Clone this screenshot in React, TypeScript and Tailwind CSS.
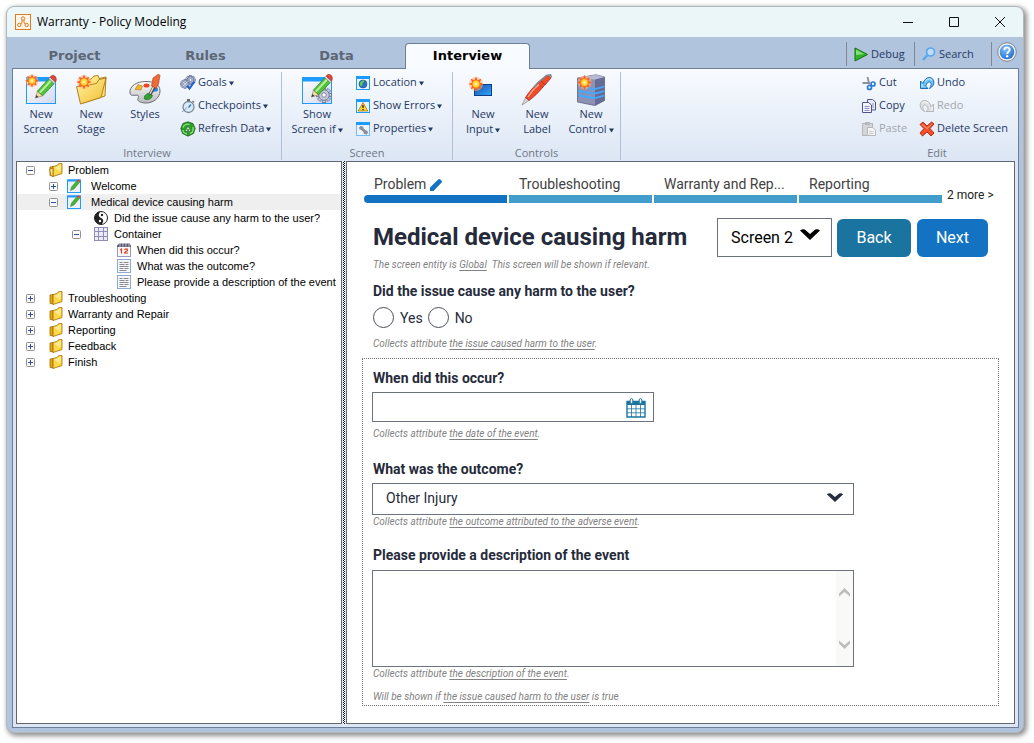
import React, { useState } from "react";

type IconProps = { className?: string };

/* ---------- shared drawing pieces ---------- */

function Burst({ x, y, s = 1 }: { x: number; y: number; s?: number }) {
  return (
    <g transform={`translate(${x} ${y}) scale(${s})`}>
      <circle r="6.4" fill="#ffb27a" opacity=".55" />
      {[0, 45, 90, 135, 180, 225, 270, 315].map((a) => (
        <path key={a} d="M-1.6 -3 L0 -6.8 L1.6 -3Z" fill="#ff5a1f" transform={`rotate(${a})`} />
      ))}
      <circle r="3.9" fill="#ff8a1c" />
      <circle r="2.9" fill="#ffd83d" />
      <circle r="1.2" fill="#fff6a8" />
    </g>
  );
}

function Pencil({ transform }: { transform?: string }) {
  return (
    <g transform={transform}>
      <path d="M10.500 24l2-7 5.200 4.800z" fill="#f3d9a4" stroke="#8a7a50" strokeWidth=".6" />
      <path d="M10.500 24l.9-3 2 1.900z" fill="#333" />
      <path d="M12.500 17L23.800 4.700l5.400 4.900-11.500 12.200z" fill="#4fc23a" stroke="#2c7f22" strokeWidth=".7" />
      <path d="M14 18L25 6l1.500 1.400L15.600 19.300z" fill="#b6f09b" />
      <path d="M23.800 4.700l1.400-1.500 5.400 4.900-1.400 1.500z" fill="#d9d9d9" stroke="#888" strokeWidth=".5" />
      <path d="M25.200 3.200c1-1.900 2.900-2.500 4.600-1.200 1.700 1.400 1.900 3.700.8 6.100z" fill="#e2453a" stroke="#9d2b22" strokeWidth=".6" />
    </g>
  );
}

function Gear({ x, y, r, fill, stroke }: { x: number; y: number; r: number; fill: string; stroke: string }) {
  return (
    <g transform={`translate(${x} ${y}) scale(${r / 7})`}>
      {[0, 45, 90, 135, 180, 225, 270, 315].map((a) => (
        <rect key={a} x="-1.600" y="-7" width="3.200" height="4" fill={fill} stroke={stroke} strokeWidth=".8" transform={`rotate(${a})`} />
      ))}
      <circle r="4.9" fill={fill} stroke={stroke} strokeWidth=".8" />
      <circle r="2.100" fill="#fff" stroke={stroke} strokeWidth=".8" />
    </g>
  );
}

/* ---------- large ribbon icons ---------- */

function ScreenFrame() {
  return (
    <>
      <defs>
        <linearGradient id="pane" x1="0" y1="0" x2="1" y2="1">
          <stop offset="0" stopColor="#ffffff" />
          <stop offset="1" stopColor="#d3d8ee" />
        </linearGradient>
      </defs>
      <rect x="1.500" y="3.500" width="29" height="26" fill="url(#pane)" stroke="#1e9bff" />
      <rect x="2" y="4" width="28" height="3.500" fill="#1e9bff" />
    </>
  );
}

function NewScreenIcon() {
  return (
    <svg viewBox="0 0 32 32" className="size-8">
      <ScreenFrame />
      <Pencil />
      <Burst x={7} y={6.800} />
    </svg>
  );
}

function FolderIcon() {
  return (
    <svg viewBox="0 0 32 32" className="size-8">
      <defs>
        <linearGradient id="fold" x1="0" y1="0" x2="1" y2="1">
          <stop offset="0" stopColor="#fff3a6" />
          <stop offset="1" stopColor="#f4bd2c" />
        </linearGradient>
      </defs>
      <path d="M4 8l10-2 2-1 3-3 4-.5 1 3 7-1.500-1 19-22 7z" fill="#ffe37a" stroke="#a87612" strokeWidth=".9" />
      <path d="M1.500 12.500l4 17.500L26 23.500 31 4l-7 1.500-2.500 4L8 12z" fill="url(#fold)" stroke="#a87612" strokeWidth=".9" />
      <Burst x={9} y={8} s={1.1} />
    </svg>
  );
}

function PaletteIcon() {
  return (
    <svg viewBox="0 0 32 32" className="size-8">
      <defs>
        <linearGradient id="pal" x1="0" y1="0" x2="0" y2="1">
          <stop offset="0" stopColor="#ffffff" />
          <stop offset="1" stopColor="#b9b9bd" />
        </linearGradient>
      </defs>
      <path d="M1 19C0 12 8 7.500 17 7.500c8 0 14 3 14 9.500 0 7-7 12.500-15 12-5-.3-8-2-7-4.500 1-2.300 1-3.500-2-3.300-3 .2-5.600.6-6-2.200z" fill="url(#pal)" stroke="#6c6c70" strokeWidth="1" />
      <path d="M6 15.500l3-5 4.500 1.500-1.500 4z" fill="#f5b52a" stroke="#a6751a" strokeWidth=".6" />
      <ellipse cx="17.500" cy="11.500" rx="3" ry="2" fill="#f0441f" />
      <ellipse cx="26" cy="15.500" rx="3" ry="2.200" fill="#2a86e8" />
      <path d="M15.500 25c-1-3.500 2-5.500 5.500-6l2.500 2.500c-1 3.500-4.500 5-8 3.500z" fill="#2fa530" stroke="#145c18" strokeWidth=".6" />
      <path d="M19.500 20l4.500-9 3.500 2-5.500 8.500z" fill="#4b4b4b" />
      <path d="M20.500 19.500l3.500-7.500 1.500.8-4 7.500z" fill="#d8d8d8" />
      <path d="M22.500 12l1.500-8L29.500 0l1.500 1.500-1.500 8.500-2.500 4.500z" fill="#f06a35" stroke="#a33c12" strokeWidth=".6" />
    </svg>
  );
}

function ShowScreenIcon() {
  return (
    <svg viewBox="0 0 32 32" className="size-8">
      <ScreenFrame />
      <Gear x={23} y={21} r={7.500} fill="#c6cadb" stroke="#6c7290" />
      <Pencil transform="translate(0 -1)" />
    </svg>
  );
}

function NewInputIcon() {
  return (
    <svg viewBox="0 0 32 32" className="size-8">
      <defs>
        <linearGradient id="inp" x1="0" y1="0" x2="1" y2="1">
          <stop offset="0" stopColor="#1450a8" />
          <stop offset="1" stopColor="#36a7ff" />
        </linearGradient>
      </defs>
      <rect x="7.500" y="10.500" width="17" height="11" fill="url(#inp)" stroke="#0a3f86" />
      <Burst x={9} y={10} s={1.1} />
    </svg>
  );
}

function PenIcon() {
  return (
    <svg viewBox="0 0 32 32" className="size-8">
      <path d="M1 31l4-8 3.500 3z" fill="#d9d9d9" stroke="#777" strokeWidth=".6" />
      <path d="M4.500 23.500C8 18 13 12 18 8l4.500 4.500C18 18 13 23 8 26.500z" fill="#f04a2a" stroke="#8f2110" strokeWidth=".7" />
      <path d="M7 23c3-5 7-9.500 11.500-13" stroke="#ffa58f" strokeWidth="1.300" fill="none" />
      <path d="M17 9l2.500-2.500 4.500 4.500-2.500 2.500z" fill="#f04a2a" stroke="#8f2110" strokeWidth=".4" />
      <path d="M19.500 6.500L27 1.500l3 2.500-6 7z" fill="#f04a2a" stroke="#8f2110" strokeWidth=".7" />
      <path d="M13 13.500L17 8.500 25.500 1.500l4-.5 1 2.500" stroke="#85888e" strokeWidth="1.700" fill="none" />
    </svg>
  );
}

function ServerIcon() {
  return (
    <svg viewBox="0 0 32 32" className="size-8">
      <path d="M2.500 4L21 .8 29.500 3v23.500L20 31.500 2.500 28z" fill="#8d92b5" stroke="#5c6083" strokeWidth=".8" />
      <path d="M20 5.500L29.500 3v23.500L20 31.500z" fill="#676c94" />
      <path d="M2.500 4L21 .8 29.500 3 20 5.500z" fill="#b5b9d3" />
      <path d="M3 12.500l17 2.500 9.500-2.500M3 17l17 2.500 9.500-2.500M3 21.500L20 24l9.500-2.500" stroke="#42a9ff" strokeWidth="1.800" fill="none" />
      <Burst x={9.500} y={8.500} s={1.100} />
    </svg>
  );
}

/* ---------- small icons ---------- */

function GoalsIcon() {
  return (
    <svg viewBox="0 0 16 16" className="size-4">
      <Gear x={10.500} y={5} r={4.800} fill="#b3bbd8" stroke="#4d587f" />
      <Gear x={5} y={9} r={4.600} fill="#c9cfe4" stroke="#4d587f" />
      <path d="M7 10.500l2.500 3 5-7" fill="none" stroke="#1c63c9" strokeWidth="2" />
    </svg>
  );
}

function StopwatchIcon() {
  return (
    <svg viewBox="0 0 16 16" className="size-4">
      <path d="M7 1h3v2.500H7z" fill="#666" />
      <path d="M12.500 3l1.500 1.500" stroke="#777" strokeWidth="1.500" />
      <circle cx="8.500" cy="9" r="5.500" fill="#d6ebfb" stroke="#7d8794" strokeWidth="1.300" />
      <path d="M8.500 9.500L11 6.500" stroke="#2b6fb8" strokeWidth="1.200" />
      <path d="M2 14l5-4.500" stroke="#7d8794" strokeWidth=".8" />
    </svg>
  );
}

function RefreshIcon() {
  return (
    <svg viewBox="0 0 16 16" className="size-4">
      <path d="M8 .8l5 1.700 2.200 5-1.700 5L8 15.200l-5.500-2.700L.8 7.500l2-5z" fill="#2f9c2b" stroke="#14590f" strokeWidth=".7" />
      <path d="M3 6.500C4 3.500 7 2.500 9.500 3.500M12.800 6c1 3-.3 5.500-2.800 6.700M7 12.800C4.500 12.500 3.200 11 3 9" stroke="#8de37f" strokeWidth="1.300" fill="none" />
      <path d="M8 5l3 5.500H5z" fill="#f3fff0" stroke="#14590f" strokeWidth=".6" />
      <circle cx="8" cy="8.900" r="1.200" fill="#2f9c2b" />
    </svg>
  );
}

function WindowFrame({ children, pale }: { children: React.ReactNode; pale?: boolean }) {
  return (
    <svg viewBox="0 0 16 16" className="size-4">
      <rect x="1.500" y="1.500" width="13" height="13" fill="#eef2fb" stroke={pale ? "#6fbcf8" : "#1e9bff"} />
      <rect x="1" y="1" width="14" height="3" fill="#1e9bff" />
      {children}
    </svg>
  );
}

function CutIcon() {
  return (
    <svg viewBox="0 0 16 16" className="size-4">
      <path d="M6.500 2l1.800 7.500M1.500 8h7.500" stroke="#8b8f96" strokeWidth="1.800" fill="none" />
      <circle cx="12" cy="9" r="2" fill="none" stroke="#2b7bd8" strokeWidth="1.700" />
      <circle cx="8.500" cy="12.500" r="2" fill="none" stroke="#2b7bd8" strokeWidth="1.700" />
    </svg>
  );
}

function CopyIcon() {
  return (
    <svg viewBox="0 0 16 16" className="size-4">
      <path d="M6.500 1.500h5l3 2.500v8h-8z" fill="#e9ebf8" stroke="#4e5490" />
      <path d="M1.500 4.500h6l3 2.500v7.500h-9z" fill="#f5f6fd" stroke="#4e5490" />
      <path d="M3.500 8.500h5M3.500 10.500h5M3.500 12.500h5" stroke="#8d93c4" />
      <path d="M12 5v5" stroke="#8d93c4" />
    </svg>
  );
}

function PasteIcon() {
  return (
    <svg viewBox="0 0 16 16" className="size-4">
      <rect x="1.500" y="2.500" width="10" height="12" fill="#d3d5d8" stroke="#b5b7ba" />
      <rect x="4" y="1" width="5" height="3" fill="#b5b7ba" />
      <path d="M6.500 6.500h5l3 2.500v5.500h-8z" fill="#f5f5f6" stroke="#b5b7ba" />
      <path d="M8 10.500h4.500M8 12.500h4.500" stroke="#c5c7ca" />
    </svg>
  );
}

function UndoIcon({ muted }: { muted?: boolean }) {
  const fill = muted ? "#dfe1e3" : "#6cc4f7";
  const line = muted ? "#b3b5b8" : "#1c6fb8";
  return (
    <svg viewBox="0 0 16 16" className="size-4">
      <g transform={muted ? "translate(16 0) scale(-1 1)" : undefined}>
        <path d="M1.500 6v7.500h7.500L6.800 11.200C7.500 8 9.500 6.300 11.200 7.200c1.600 1 1.200 3.600-.7 6.300C14 11.800 15.400 8.800 14.600 6 13.400 1 6.500.8 4 8.500z" fill={fill} stroke={line} strokeWidth="1" strokeLinejoin="round" />
        <path d="M6 6.500C8 3.500 11.500 3 13 5.500M3 9v3" stroke="#fff" strokeWidth="1" fill="none" opacity=".8" />
      </g>
    </svg>
  );
}

function DeleteIcon() {
  return (
    <svg viewBox="0 0 16 16" className="size-4">
      <path d="M1 3.500L4 1l4 4 4.500-4L15 3 11 7.500l4 4.500-3 3-4-4-4.500 4L1 12l4-4.500z" fill="#f2512c" stroke="#a82209" strokeWidth=".9" />
      <path d="M3 3.500l5 4 4.500-4" stroke="#ff9c80" fill="none" />
    </svg>
  );
}

function PlayIcon() {
  return (
    <svg viewBox="0 0 16 16" className="size-4">
      <path d="M2 2l12.500 6.500L2 15z" fill="#2fb52c" stroke="#14700f" />
      <path d="M3 3.500l8 4.500-8 1z" fill="#83e07a" />
    </svg>
  );
}

function SearchIcon() {
  return (
    <svg viewBox="0 0 16 16" className="size-4">
      <circle cx="9.500" cy="6" r="4" fill="#c3dcf6" stroke="#5aa7ee" strokeWidth="1.700" />
      <path d="M6.500 9l-4.500 5" stroke="#5aa7ee" strokeWidth="2.400" />
    </svg>
  );
}

function HelpIcon() {
  return (
    <svg viewBox="0 0 20 20" className="size-5">
      <defs>
        <radialGradient id="help" cx=".4" cy=".3" r=".8">
          <stop offset="0" stopColor="#7fc0ff" />
          <stop offset="1" stopColor="#1c66c4" />
        </radialGradient>
      </defs>
      <circle cx="10" cy="10" r="9.300" fill="#eef0f4" stroke="#7d8490" strokeWidth="1" />
      <circle cx="10" cy="10" r="7.300" fill="url(#help)" />
      <path d="M7.300 8C7.300 4.500 12.800 4.600 12.700 7.800 12.600 9.800 10.200 9.600 10.200 12" stroke="#fff" strokeWidth="1.900" fill="none" />
      <circle cx="10.200" cy="14.300" r="1.200" fill="#fff" />
    </svg>
  );
}

/* ---------- tree icons ---------- */

function StageIcon({ open }: { open?: boolean }) {
  return (
    <svg viewBox="0 0 14 14" className="size-[14px] shrink-0">
      <path d="M1 4l3-.5V13l-3-.5z" fill="#e9aa12" stroke="#9c6c06" strokeWidth=".8" />
      <path d="M4 3.500L8 2.500 9.500.8 13 .5v10L4 13.500z" fill="#ffd84a" stroke="#9c6c06" strokeWidth=".8" />
      <path d="M5 4.500l4-1 1.500-1.700 1.500-.3-1 7z" fill="#fff2a8" opacity=".8" />
      {open && <path d="M.5 6l3.500-.7V13.500L2 12.500z" fill="#ffe88a" stroke="#9c6c06" strokeWidth=".8" />}
    </svg>
  );
}

function ScreenIcon() {
  return (
    <svg viewBox="0 0 14 14" className="size-[14px] shrink-0">
      <rect x=".5" y="1" width="13" height="12.500" fill="#eef1fb" stroke="#1e9bff" />
      <rect x=".5" y=".5" width="13" height="2" fill="#1e9bff" />
      <path d="M3.500 11.500l1-3.500L10 1.500 12.500 3.500 7 10z" fill="#46b536" stroke="#2c7f22" strokeWidth=".5" />
      <path d="M10 1.500L11.200.2 13.700 2l-1.200 1.500z" fill="#e2453a" />
    </svg>
  );
}

function YinYangIcon() {
  return (
    <svg viewBox="0 0 14 14" className="size-[14px] shrink-0">
      <circle cx="7" cy="7" r="6.500" fill="#fff" stroke="#222" />
      <path d="M7 .5a6.500 6.500 0 0 0 0 13 3.250 3.250 0 0 0 0-6.500 3.250 3.250 0 0 1 0-6.500z" fill="#222" transform="rotate(20 7 7)" />
      <circle cx="8" cy="4" r="1.200" fill="#222" />
      <circle cx="6" cy="10" r="1.200" fill="#fff" />
    </svg>
  );
}

function GridIcon() {
  return (
    <svg viewBox="0 0 14 14" className="size-[14px] shrink-0">
      <rect x=".5" y=".5" width="13" height="13" fill="#eceaf8" stroke="#8f8fb5" />
      <path d="M4.500 0v14M9.500 0v14M0 4.500h14M0 9.500h14" stroke="#8f8fb5" />
    </svg>
  );
}

function DateIcon() {
  return (
    <svg viewBox="0 0 14 14" className="size-[14px] shrink-0">
      <rect x=".5" y="2.500" width="13" height="11" fill="#f7f7fc" stroke="#9a9ac0" />
      <path d="M0 3L2 .5h11L14 4H0z" fill="#5a5a70" />
      <path d="M3 0v4M6 0v4M9 0v4M12 0v4" stroke="#d8d8e4" strokeWidth=".8" />
      <path d="M3 7l1.500-1v4.500M7.500 7c.5-1.500 3.500-1.500 3 .3-.3 1-3 1.700-3 2.700H11" stroke="#e2401c" strokeWidth="1.200" fill="none" />
    </svg>
  );
}

function TextIcon() {
  return (
    <svg viewBox="0 0 14 14" className="size-[14px] shrink-0">
      <rect x=".5" y=".5" width="13" height="13" fill="#f3f6fd" stroke="#8da9cf" />
      <path d="M2.500 3.500h3M6.500 3.500h5M2.500 5.500h5M8.500 5.500h3M2.500 7.500h9M2.500 9.500h4M7.500 9.500h4M2.500 11.500h7" stroke="#8a8a8a" />
    </svg>
  );
}

/* ---------- ribbon parts ---------- */

function Caret() {
  return (
    <svg viewBox="0 0 5 5" className="ml-[2px] inline-block size-[5px] align-middle" aria-hidden="true">
      <path d="M0 .5h5L2.500 4.500z" fill="#1f3864" />
    </svg>
  );
}

function BigButton({ icon, lines, menu, className }: { icon: React.ReactNode; lines: string[]; menu?: boolean; className: string }) {
  return (
    <button type="button" className={`flex shrink-0 flex-col items-center pt-[2px] ${className}`}>
      {icon}
      <span className="flex flex-col items-center whitespace-nowrap leading-[15px]">
        {lines.map((line, i) => (
          <span key={line}>
            {line}
            {menu && i === lines.length - 1 && <Caret />}
          </span>
        ))}
      </span>
    </button>
  );
}

function SmallButton({ icon, label, menu, disabled }: { icon: React.ReactNode; label: string; menu?: boolean; disabled?: boolean }) {
  return (
    <button type="button" disabled={disabled} className="flex h-[23px] items-center gap-[2px] pb-[2px] whitespace-nowrap disabled:text-[#a3a6ab]">
      {icon}
      <span>
        {label}
        {menu && <Caret />}
      </span>
    </button>
  );
}

function Group({ title, children, className, last }: { title: string; children: React.ReactNode; className: string; last?: boolean }) {
  return (
    <section className={`flex shrink-0 flex-col justify-between ${last ? "" : "border-r border-[#aebfd6]"} ${className}`}>
      <div className="flex">{children}</div>
      <h2 className="text-center leading-[15px] text-[#6f7787]">{title}</h2>
    </section>
  );
}

function Ribbon() {
  return (
    <div className="flex h-[92px] pt-[3px] pb-px font-['Open_Sans','Noto_Sans',sans-serif] text-[11px] text-[#1f3864]">
      <Group title="Interview" className="w-[269px]">
        <BigButton icon={<NewScreenIcon />} lines={["New", "Screen"]} className="ml-[3px] w-[50px]" />
        <BigButton icon={<FolderIcon />} lines={["New", "Stage"]} className="w-[50px]" />
        <BigButton icon={<PaletteIcon />} lines={["Styles"]} className="w-[58px]" />
        <div className="ml-[6px]">
          <SmallButton icon={<GoalsIcon />} label="Goals" menu />
          <SmallButton icon={<StopwatchIcon />} label="Checkpoints" menu />
          <SmallButton icon={<RefreshIcon />} label="Refresh Data" menu />
        </div>
      </Group>
      <Group title="Screen" className="w-[171px]">
        <BigButton icon={<ShowScreenIcon />} lines={["Show", "Screen if"]} menu className="ml-[4px] w-[62px]" />
        <div className="ml-[7px]">
          <SmallButton
            icon={
              <WindowFrame>
                <circle cx="8" cy="9" r="4" fill="#2a72c8" stroke="#1a4f90" strokeWidth=".6" />
                <path d="M5 7.500c1.500-2 3.500-2.500 4.500-2-.5 2-2 2-2 3.500s-1 2-1.500 2.500c-1-1-1.300-2.500-1-4z" fill="#5ec94a" />
              </WindowFrame>
            }
            label="Location"
            menu
          />
          <SmallButton
            icon={
              <WindowFrame>
                <path d="M8 4.500l4.800 8.500H3.200z" fill="#ffd532" stroke="#a8780a" strokeWidth=".8" />
                <path d="M8 7v3M8 11v1.200" stroke="#222" strokeWidth="1.300" />
              </WindowFrame>
            }
            label="Show Errors"
            menu
          />
          <SmallButton
            icon={
              <WindowFrame pale>
                <path d="M4 6.500L5.500 5l2.500.5.500 1.700 2.500 2.300 1.500.5.500 2L11.500 13.500 9 13l-.5-2L6 8.800 4.500 8.500z" fill="#8c8f96" />
              </WindowFrame>
            }
            label="Properties"
            menu
          />
        </div>
      </Group>
      <Group title="Controls" className="w-[168px]">
        <BigButton icon={<NewInputIcon />} lines={["New", "Input"]} menu className="ml-[3px] w-[54px]" />
        <BigButton icon={<PenIcon />} lines={["New", "Label"]} className="w-[54px]" />
        <BigButton icon={<ServerIcon />} lines={["New", "Control"]} menu className="w-[54px]" />
      </Group>
      <div className="grow" />
      <Group title="Edit" className="w-[162px]" last>
        <div className="ml-[5px] w-[58px]">
          <SmallButton icon={<CutIcon />} label="Cut" />
          <SmallButton icon={<CopyIcon />} label="Copy" />
          <SmallButton icon={<PasteIcon />} label="Paste" disabled />
        </div>
        <div>
          <SmallButton icon={<UndoIcon />} label="Undo" />
          <SmallButton icon={<UndoIcon muted />} label="Redo" disabled />
          <SmallButton icon={<DeleteIcon />} label="Delete Screen" />
        </div>
      </Group>
    </div>
  );
}

/* ---------- tree ---------- */

type Row = { label: string; pad: string; box?: "+" | "-"; icon: React.ReactNode; gap: string; selected?: boolean };

const rows: Row[] = [
  { label: "Problem", pad: "pl-[9px]", box: "-", icon: <StageIcon open />, gap: "gap-[5px]" },
  { label: "Welcome", pad: "pl-[32px]", box: "+", icon: <ScreenIcon />, gap: "gap-[10px]" },
  { label: "Medical device causing harm", pad: "pl-[32px]", box: "-", icon: <ScreenIcon />, gap: "gap-[10px]", selected: true },
  { label: "Did the issue cause any harm to the user?", pad: "pl-[77px]", icon: <YinYangIcon />, gap: "gap-[6px]" },
  { label: "Container", pad: "pl-[55px]", box: "-", icon: <GridIcon />, gap: "gap-[6px]" },
  { label: "When did this occur?", pad: "pl-[100px]", icon: <DateIcon />, gap: "gap-[6px]" },
  { label: "What was the outcome?", pad: "pl-[100px]", icon: <TextIcon />, gap: "gap-[6px]" },
  { label: "Please provide a description of the event", pad: "pl-[100px]", icon: <TextIcon />, gap: "gap-[6px]" },
  ...["Troubleshooting", "Warranty and Repair", "Reporting", "Feedback", "Finish"].map(
    (label): Row => ({ label, pad: "pl-[9px]", box: "+", icon: <StageIcon />, gap: "gap-[5px]" }),
  ),
];

const boxMargins: Record<string, string> = {
  "pl-[9px]": "mr-[14px]",
  "pl-[32px]": "mr-[9px]",
  "pl-[55px]": "mr-[13px]",
};

function Tree() {
  return (
    <ul className="w-[326px] shrink-0 border border-[#64686e] bg-white font-['Liberation_Sans',Arial,sans-serif] text-[11px] text-black">
      {rows.map((r) => (
        <li key={r.label} className={`flex h-4 items-center ${r.pad} ${r.selected ? "bg-[#efefef]" : ""}`}>
          {r.box && (
            <button type="button" aria-label={r.box === "+" ? `Expand ${r.label}` : `Collapse ${r.label}`} className={`shrink-0 ${boxMargins[r.pad]}`}>
              <svg viewBox="0 0 9 9" className="size-[9px]">
                <rect x=".5" y=".5" width="8" height="8" rx="1" fill="#fafafa" stroke="#919191" />
                <path d={r.box === "+" ? "M2 4.500h5M4.500 2v5" : "M2 4.500h5"} stroke="#2f4fa0" />
              </svg>
            </button>
          )}
          <span className={`flex items-center whitespace-nowrap ${r.gap}`}>
            {r.icon}
            {r.label}
          </span>
        </li>
      ))}
    </ul>
  );
}

/* ---------- interview preview ---------- */

function Hint({ children, className }: { children: React.ReactNode; className?: string }) {
  return <p className={`text-[10px] leading-[14px] text-[#828282] italic ${className ?? ""}`}>{children}</p>;
}

function Ref({ children }: { children: React.ReactNode }) {
  return (
    <a href="#attribute" className="underline underline-offset-2">
      {children}
    </a>
  );
}

function Chevron({ className }: IconProps) {
  return (
    <svg viewBox="0 0 20 11" className={className} aria-hidden="true">
      <path d="M0 1.500Q3.500-1 6 1.500L10 5l4-3.500Q16.500-1 20 1.500L10 11z" fill="currentColor" />
    </svg>
  );
}

function CalendarIcon() {
  return (
    <svg viewBox="0 0 20 20" className="size-5">
      <path d="M1 3.500h18V19H1z" fill="#fff" stroke="#1b74a0" strokeWidth="1.400" />
      <path d="M1 3h18v4H1z" fill="#1b74a0" />
      <path d="M1 10.800h18M1 14.800h18M5.500 7v12M10 7v12M14.500 7v12" stroke="#1b74a0" strokeWidth=".8" />
      <rect x="4.200" y=".7" width="2.600" height="4.800" rx="1.300" fill="#fff" stroke="#1b74a0" />
      <rect x="13.200" y=".7" width="2.600" height="4.800" rx="1.300" fill="#fff" stroke="#1b74a0" />
    </svg>
  );
}

const stages = ["Problem", "Troubleshooting", "Warranty and Rep...", "Reporting"];

function Preview() {
  const [harm, setHarm] = useState("");
  return (
    <main className="min-w-0 flex-1 border border-[#64686e] bg-white px-[15px] pb-[10px] font-[Roboto,sans-serif] text-sm text-[#262b3b]">
      <nav className="flex pt-[12px] pl-[2px]">
        {stages.map((s, i) => (
          <button key={s} type="button" className="mr-[2px] w-[143px] text-left text-[#424242]">
            <span className="flex h-5 items-start pl-[10px] leading-[18px] whitespace-nowrap">
              {s}
              {i === 0 && (
                <svg viewBox="0 0 12 12" className="mt-1 ml-1 size-3" aria-hidden="true">
                  <path d="M0 12V8.500L8.200.6Q9.300-.4 10.500.7l.9.8q1.100 1.200 0 2.300L3.500 12z" fill="#1373c2" />
                </svg>
              )}
            </span>
            <span className={`block h-2 ${i === 0 ? "rounded-l bg-[#1373c2]" : "bg-[#439dca]"}`} />
          </button>
        ))}
        <button type="button" className="mt-[13px] ml-[3px] h-[16px] text-xs whitespace-nowrap text-[#222]">
          2 more &gt;
        </button>
      </nav>

      <header className="mt-[15px] flex items-start justify-between pr-[11px] pl-[11px]">
        <h1 className="pt-1 text-2xl leading-[30px] font-bold">Medical device causing harm</h1>
        <div className="flex text-base">
          <div className="relative">
            <select aria-label="Screen" className="h-[39px] w-[115px] appearance-none border border-[#6d737c] bg-white pl-[13px] text-black">
              <option>Screen 2</option>
            </select>
            <Chevron className="pointer-events-none absolute top-[11px] right-[12px] h-[11px] w-[20px] text-black" />
          </div>
          <button type="button" className="mt-px ml-[5px] h-[38px] w-[74px] rounded-md bg-[#1b74a0] text-white">
            Back
          </button>
          <button type="button" className="mt-px ml-[6px] h-[38px] w-[71px] rounded-md bg-[#1373c2] text-white">
            Next
          </button>
        </div>
      </header>
      <Hint className="mt-px ml-[11px]">
        The screen entity is <Ref>Global</Ref> &nbsp;This screen will be shown if relevant.
      </Hint>

      <fieldset className="mt-[11px] ml-[11px]">
        <legend className="leading-4 font-bold">Did the issue cause any harm to the user?</legend>
        <div className="mt-2 flex gap-[5px]">
          {["Yes", "No"].map((v) => (
            <label key={v} className="flex items-center gap-[6px]">
              <input
                type="radio"
                name="harm"
                checked={harm === v}
                onChange={() => setHarm(v)}
                className="size-[21px] appearance-none rounded-full border border-[#4b4f57] bg-white checked:border-[6px] checked:border-[#1373c2]"
              />
              {v}
            </label>
          ))}
        </div>
      </fieldset>
      <Hint className="mt-[9px] ml-[11px]">
        Collects attribute <Ref>the issue caused harm to the user</Ref>.
      </Hint>

      <section className="mt-[7px] border border-dotted border-[#777] pl-[9px]">
        <label htmlFor="when" className="mt-[11px] ml-px block leading-4 font-bold">
          When did this occur?
        </label>
        <div className="relative mt-[6px] w-[282px]">
          <input id="when" type="text" className="block h-[30px] w-full border border-[#6d737c] pr-9 pl-3" />
          <button type="button" aria-label="Choose a date" className="absolute top-[6px] right-[8px]">
            <CalendarIcon />
          </button>
        </div>
        <Hint className="mt-[5px] ml-px">
          Collects attribute <Ref>the date of the event</Ref>.
        </Hint>

        <label htmlFor="outcome" className="mt-5 ml-px block leading-4 font-bold">
          What was the outcome?
        </label>
        <div className="relative mt-[6px] w-[482px]">
          <select id="outcome" className="block h-8 w-full appearance-none border border-[#6d737c] bg-white pb-[2px] pl-[13px]">
            <option>Other Injury</option>
          </select>
          <Chevron className="pointer-events-none absolute top-[10px] right-[10px] h-[9px] w-[18px] text-[#262b3b]" />
        </div>
        <Hint className="ml-px">
          Collects attribute <Ref>the outcome attributed to the adverse event</Ref>.
        </Hint>

        <label htmlFor="description" className="mt-[18px] ml-px block leading-4 font-bold">
          Please provide a description of the event
        </label>
        <div className="mt-[7px] flex h-[97px] w-[482px] border border-[#6d737c]">
          <textarea id="description" className="flex-1 resize-none p-2 outline-none" />
          <div className="flex w-[17px] flex-col items-center justify-between bg-[#f9f9f8] pt-[17px] pb-[17px] text-[#bcbcbc]">
            <svg viewBox="0 0 11 9" className="h-[9px] w-[11px]" aria-hidden="true">
              <path d="M0 8.500V5.500L5.500 0 11 5.500v3L5.500 4z" fill="currentColor" />
            </svg>
            <svg viewBox="0 0 11 9" className="h-[9px] w-[11px]" aria-hidden="true">
              <path d="M0 .5v3L5.500 9 11 3.500v-3L5.500 5z" fill="currentColor" />
            </svg>
          </div>
        </div>
        <Hint className="ml-px">
          Collects attribute <Ref>the description of the event</Ref>.
        </Hint>
        <Hint className="mt-[9px] mb-px ml-px">
          Will be shown if <Ref>the issue caused harm to the user</Ref> is true
        </Hint>
      </section>
    </main>
  );
}

/* ---------- window ---------- */

export default function App() {
  return (
    <div className="flex min-h-screen w-full flex-col bg-white pt-[6px] pr-[10px] pb-[10px] pl-[6px]">
      <div className="flex flex-1 flex-col overflow-hidden rounded-lg border border-[#b3b7bb] bg-[#b0c4de] shadow-[2px_2px_5px_1px_#00000070]">
        <div className="flex h-[30px] items-center bg-[#eaf6f8] pl-[8px] font-['Open_Sans','Noto_Sans',sans-serif] text-xs text-black">
          <svg viewBox="0 0 16 16" className="size-4" aria-hidden="true">
            <rect x=".5" y=".5" width="15" height="15" fill="#fff6ec" stroke="#e07a1c" />
            <circle cx="8" cy="4.500" r="1.700" fill="none" stroke="#e07a1c" />
            <circle cx="4.300" cy="11" r="1.700" fill="none" stroke="#e07a1c" />
            <circle cx="11.700" cy="11" r="1.700" fill="none" stroke="#e07a1c" />
            <path d="M7 6v3l-1.500 1M9 6v3l1.500 1" stroke="#e07a1c" fill="none" />
          </svg>
          <h1 className="ml-[6px] flex-1">Warranty - Policy Modeling</h1>
          <div className="flex">
            {[
              ["Minimize", "M0 5.500h10"],
              ["Maximize", "M.5.5h9v9h-9z"],
              ["Close", "M0 0l10 10M10 0L0 10"],
            ].map(([name, d]) => (
              <button key={name} type="button" aria-label={name} className="flex h-[30px] w-[46px] items-center justify-center">
                <svg viewBox="0 0 10 10" className="size-[10px] overflow-visible">
                  <path d={d} stroke="#111" fill="none" />
                </svg>
              </button>
            ))}
          </div>
        </div>

        <div className="flex flex-1 flex-col pr-[4px] pb-[4px] pl-[5px]">
          <div className="flex h-[31px] items-end">
            <div role="tablist" className="-mb-px flex gap-[6px] font-['DejaVu_Sans',Verdana,sans-serif] text-[13px] font-bold text-[#5d6673]">
              {["Project", "Rules", "Data", "Interview"].map((t) => (
                <button
                  key={t}
                  type="button"
                  role="tab"
                  aria-selected={t === "Interview"}
                  className="z-10 h-[26px] w-[125px] rounded-t border border-b-0 border-transparent pb-[2px] aria-selected:border-[#6d7f98] aria-selected:bg-[#f8fbff] aria-selected:text-black"
                >
                  {t}
                </button>
              ))}
            </div>
            <div className="mb-[2px] ml-auto flex font-['Open_Sans','Noto_Sans',sans-serif] text-[11px] text-[#1f3864]">
              <button type="button" className="flex h-6 w-[68px] items-center gap-[2px] border-l border-[#7c8797] pl-[6px]">
                <PlayIcon />
                Debug
              </button>
              <button type="button" className="flex h-6 w-[77px] items-center gap-[2px] border-l border-[#7c8797] pl-[6px]">
                <SearchIcon />
                Search
              </button>
              <button type="button" aria-label="Help" className="flex h-6 w-[28px] items-start justify-end border-l border-[#7c8797] pr-[2px]">
                <HelpIcon />
              </button>
            </div>
          </div>

          <div className="flex flex-1 flex-col border border-[#6d7f98] bg-[#dce6f4]">
            <div className="bg-linear-to-b from-[#f8fbff] to-[#dce6f4]">
              <Ribbon />
            </div>
            <div className="flex flex-1 px-[3px] pb-[3px]">
              <Tree />
              <div className="mx-px w-[2px] shrink-0 bg-[repeating-conic-gradient(#111_0_25%,#fff_0_50%)] bg-[size:2px_2px]" />
              <Preview />
            </div>
          </div>
        </div>
      </div>
    </div>
  );
}
